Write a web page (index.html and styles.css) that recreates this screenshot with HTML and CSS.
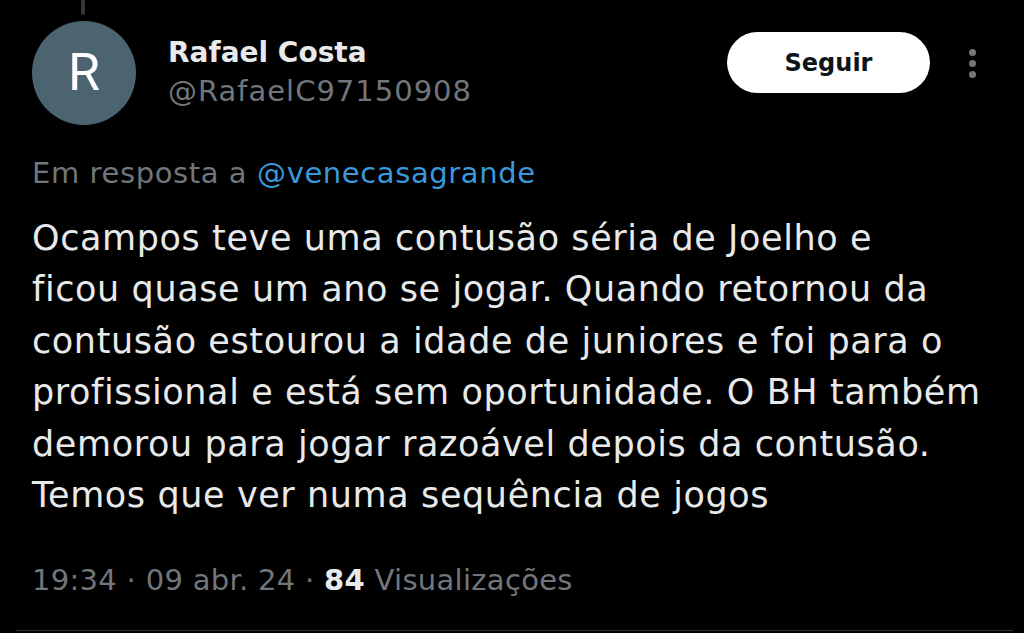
FILE: index.html
```html
<!DOCTYPE html>
<html lang="pt">
<head>
<meta charset="utf-8">
<link rel="stylesheet" href="styles.css">
</head>
<body>
<article class="tweet">
  <div class="thread-line"></div>
  <header class="head">
    <div class="avatar">R</div>
    <div class="names">
      <div class="name">Rafael Costa</div>
      <div class="handle">@RafaelC97150908</div>
    </div>
    <button class="follow">Seguir</button>
    <div class="more"><span></span><span></span><span></span></div>
  </header>
  <div class="reply">Em resposta a <span class="link">@venecasagrande</span></div>
  <p class="body">Ocampos teve uma contusão séria de Joelho e<br>ficou quase um ano se jogar. Quando retornou da<br>contusão estourou a idade de juniores e foi para o<br>profissional e está sem oportunidade. O BH também<br>demorou para jogar razoável depois da contusão.<br>Temos que ver numa sequência de jogos</p>
  <div class="meta">19:34 · 09 abr. 24 · <b>84</b> Visualizações</div>
  <div class="divider"></div>
</article>
</body>
</html>
```
FILE: styles.css
```css
html, body {
  margin: 0;
  padding: 0;
  background: #000;
}
body {
  width: 1024px;
  height: 633px;
  overflow: hidden;
  font-family: "DejaVu Sans", Roboto, sans-serif;
  color: #e7e9ea;
}
.tweet {
  position: relative;
  padding: 0 48px 0 32px;
}
.thread-line {
  position: absolute;
  left: 81px;
  top: 0;
  width: 4px;
  height: 15px;
  background: #333639;
  border-radius: 0 0 2px 2px;
}
.head {
  display: flex;
  align-items: flex-start;
  padding-top: 21px;
  height: 104px;
}
.avatar {
  width: 104px;
  height: 104px;
  border-radius: 50%;
  background: #4c6470;
  color: #fff;
  font-family: Roboto, sans-serif;
  font-size: 52px;
  line-height: 1;
  display: flex;
  align-items: center;
  justify-content: center;
  flex: none;
}
.names {
  margin-left: 32px;
  padding-top: 15px;
  flex: 1;
}
.name {
  font-size: 28px;
  font-weight: 700;
  line-height: 34px;
}
.handle {
  font-size: 29px;
  line-height: 34px;
  letter-spacing: 1px;
  margin-top: 4px;
  color: #71767b;
}
.follow {
  margin-top: 11px;
  width: 203px;
  height: 61px;
  border: none;
  border-radius: 31px;
  background: #fff;
  color: #0f1419;
  font-family: inherit;
  font-size: 24px;
  font-weight: 700;
  padding: 0;
}
.more {
  margin-left: 38px;
  margin-top: 28px;
  width: 8px;
  display: flex;
  flex-direction: column;
  gap: 4px;
  align-items: center;
}
.more span {
  width: 7px;
  height: 7px;
  border-radius: 50%;
  background: #71767b;
}
.reply {
  margin-top: 31px;
  font-size: 29px;
  line-height: 34px;
  letter-spacing: 0.6px;
  color: #71767b;
}
.link {
  color: #3a98db;
}
.body {
  margin: 23px 0 0;
  font-size: 35px;
  line-height: 51.4px;
  letter-spacing: 0.6px;
  color: #e7e9ea;
  white-space: nowrap;
}
.meta {
  margin-top: 42px;
  font-size: 29px;
  line-height: 34px;
  letter-spacing: 0.3px;
  color: #71767b;
}
.meta b {
  color: #e7e9ea;
  font-weight: 700;
}
.divider {
  position: absolute;
  left: 16px;
  right: 11px;
  top: 630px;
  height: 1px;
  background: #2f3336;
}
```
